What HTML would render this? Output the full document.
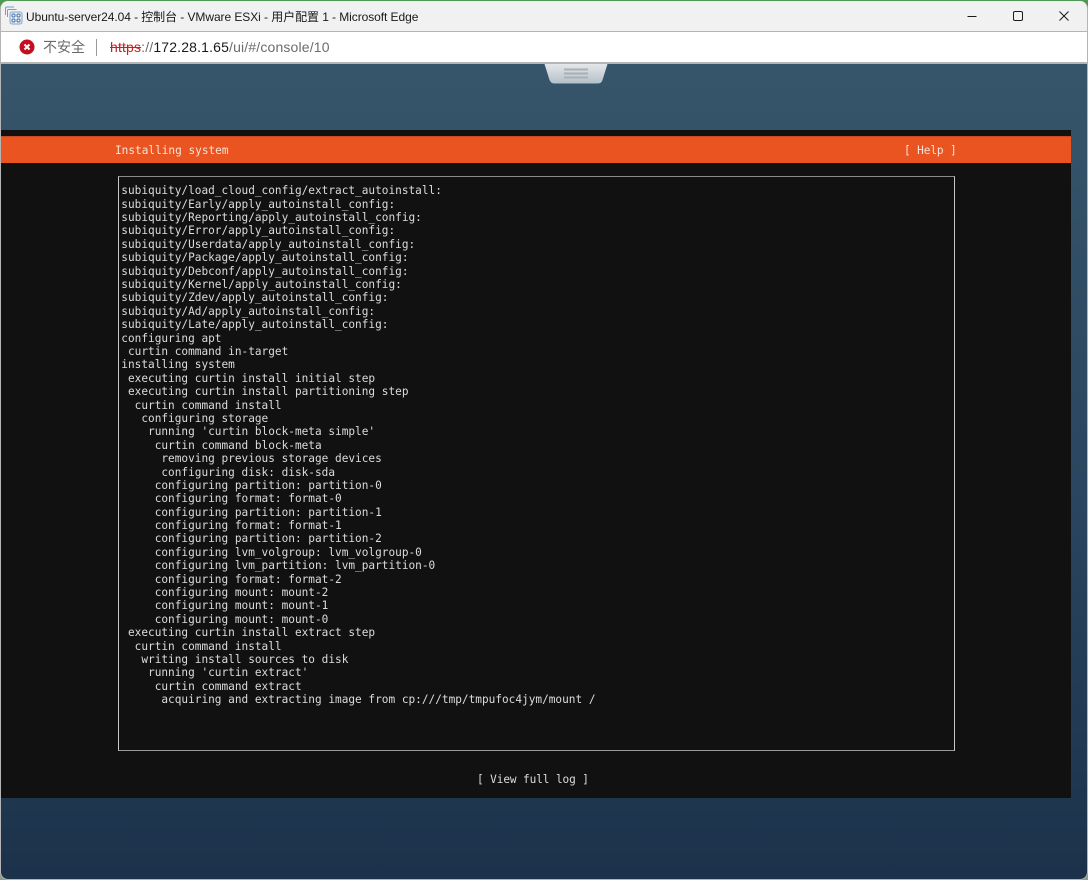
<!DOCTYPE html>
<html><head><meta charset="utf-8"><style>
html,body{margin:0;padding:0;width:1088px;height:880px;overflow:hidden;background:#8a9a90}
*{box-sizing:border-box}
.abs{position:absolute}
#win{position:absolute;left:0;top:0;width:1088px;height:880px;overflow:hidden}
#title{position:absolute;left:1px;top:1px;width:1086px;height:30px;background:#f1f1f1;border-radius:7px 7px 0 0;font:12px "Liberation Sans","Noto Sans CJK SC",sans-serif;color:#1a1a1a}
.term{font-family:"DejaVu Sans Mono","Liberation Mono",monospace;font-size:11.1px;color:#dcdcdc;white-space:pre;line-height:13.39px}
</style></head><body>
<div class="abs" style="left:0;top:0;width:1088px;height:37px;background:#4f9a52"></div>
<div id="win">
<div class="abs" style="left:0;top:1px;width:1088px;height:879px;background:#b5b5b5;border-radius:8px"></div>
<div id="title">
<svg class="abs" style="left:2px;top:4px" width="20" height="20" viewBox="0 0 20 20" fill="none"><path d="M2.500 10V3.500a1.500 1.500 0 0 1 1.500-1.500h7" stroke="#6b9fd0"/><path d="M4.500 12V5.500a1 1 0 0 1 1-1h8" stroke="#6b9fd0"/><rect x="7" y="7" width="12" height="12" rx="2" fill="#f1f1f1" stroke="#7aa5d0"/><rect x="9" y="9" width="3" height="3" rx="1" stroke="#3f6fa8"/><rect x="14" y="9" width="3" height="3" rx="1" stroke="#3f6fa8"/><rect x="9" y="14" width="3" height="3" rx="1" stroke="#3f6fa8"/><rect x="14" y="14" width="3" height="3" rx="1" stroke="#3f6fa8"/></svg>
<div class="abs" style="left:25px;top:7px;white-space:pre;letter-spacing:-.07px">Ubuntu-server24.04 - 控制台 - VMware ESXi - 用户配置 1 - Microsoft Edge</div>
<svg class="abs" style="left:965px;top:5px" width="110" height="20" viewBox="0 0 110 20" fill="none" stroke="#1a1a1a" stroke-width="1"><path d="M1.500 10.500H10.500"/><rect x="47.500" y="5.500" width="9" height="9" rx="1.500"/><path d="M93.500 5.500l9 9M102.500 5.500l-9 9"/></svg>
</div>
<div class="abs" style="left:1px;top:32px;width:1086px;height:30px;background:#fff;font:14px 'Liberation Sans','Noto Sans CJK SC',sans-serif">
<svg class="abs" style="left:18px;top:7px" width="16" height="16" viewBox="0 0 16 16"><circle cx="8" cy="8" r="7.500" fill="#c40d1e"/><path d="M5.500 5.500l5 5M10.500 5.500l-5 5" stroke="#fff" stroke-width="2"/></svg>
<div class="abs" style="left:42px;top:5px;font-size:14px;color:#6a6a6a">不安全</div>
<div class="abs" style="left:95px;top:7px;width:1px;height:17px;background:#9a9a9a"></div>
<div class="abs" style="left:109px;top:7px;white-space:pre;font-size:14px;letter-spacing:.16px;color:#6c6c6c"><span style="color:#c8201c;text-decoration:line-through">https</span>://<span style="color:#1a1a1a">172.28.1.65</span>/ui/#/console/10</div>
</div>
<div class="abs" style="left:1px;top:64px;width:1086px;height:815px;border-radius:0 0 7px 7px;background:linear-gradient(#36556a 0,#2b4660 420px,#1c324b 815px)"></div>
<svg class="abs" style="left:544px;top:64px" width="64" height="20" viewBox="0 0 64 20"><defs><linearGradient id="g" x1="0" y1="0" x2="0" y2="1"><stop offset="0" stop-color="#e4e7e9"/><stop offset="1" stop-color="#b4c0c8"/></linearGradient></defs><path d="M0.500 0H63.500L58.500 16Q57.500 19.500 54 19.500H10Q7 19.500 5.500 16Z" fill="url(#g)"/><path d="M20 5.500H44M20 9.500H44M20 13.500H44" stroke="#a9b1b6" stroke-width="2"/></svg>
<div class="abs" style="left:1px;top:130px;width:1070px;height:668px;background:#111111"></div>
<div class="abs" style="left:1px;top:136px;width:1070px;height:27px;background:#e95420;border-top:1px solid #c84a20"></div>
<div class="abs" style="left:118px;top:176px;width:837px;height:575px;border:1px solid #c8c8c8;border-top-color:#8a8a8a;border-bottom-color:#9a9a9a"></div>
<div class="term abs" style="left:115px;top:144px;color:#f5e3da">Installing system</div>
<div class="term abs" style="left:904px;top:144px;color:#f5e3da;letter-spacing:-.1px">[ Help ]</div>
<div class="term abs" style="left:121.300px;top:184.300px">subiquity/load_cloud_config/extract_autoinstall:
subiquity/Early/apply_autoinstall_config:
subiquity/Reporting/apply_autoinstall_config:
subiquity/Error/apply_autoinstall_config:
subiquity/Userdata/apply_autoinstall_config:
subiquity/Package/apply_autoinstall_config:
subiquity/Debconf/apply_autoinstall_config:
subiquity/Kernel/apply_autoinstall_config:
subiquity/Zdev/apply_autoinstall_config:
subiquity/Ad/apply_autoinstall_config:
subiquity/Late/apply_autoinstall_config:
configuring apt
 curtin command in-target
installing system
 executing curtin install initial step
 executing curtin install partitioning step
  curtin command install
   configuring storage
    running 'curtin block-meta simple'
     curtin command block-meta
      removing previous storage devices
      configuring disk: disk-sda
     configuring partition: partition-0
     configuring format: format-0
     configuring partition: partition-1
     configuring format: format-1
     configuring partition: partition-2
     configuring lvm_volgroup: lvm_volgroup-0
     configuring lvm_partition: lvm_partition-0
     configuring format: format-2
     configuring mount: mount-2
     configuring mount: mount-1
     configuring mount: mount-0
 executing curtin install extract step
  curtin command install
   writing install sources to disk
    running 'curtin extract'
     curtin command extract
      acquiring and extracting image from cp:///tmp/tmpufoc4jym/mount /</div>
<div class="term abs" style="left:477px;top:773px;letter-spacing:-.1px">[ View full log ]</div>
</div>
</body></html>
